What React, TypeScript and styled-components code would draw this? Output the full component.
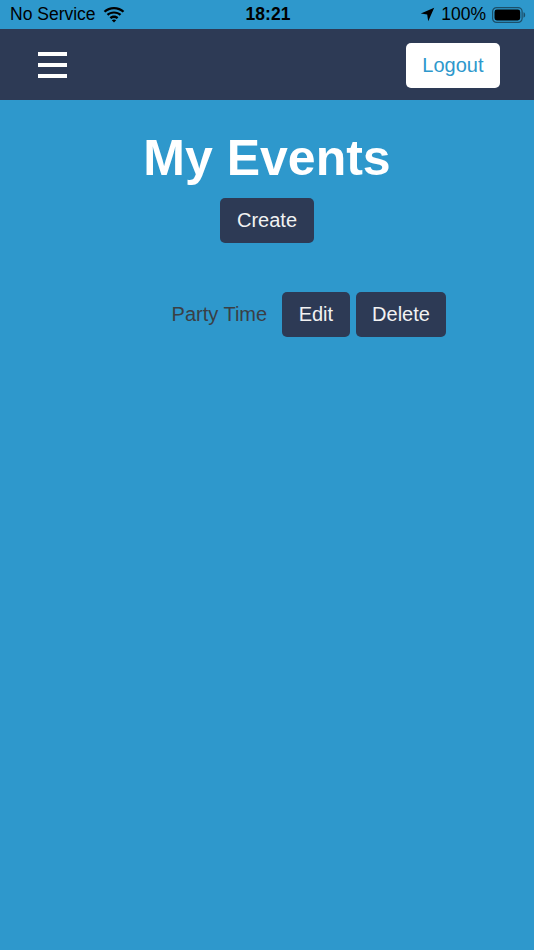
import React from "react";
import styled, { createGlobalStyle } from "styled-components";

const colors = {
    blue: "#2e98cc",
    navy: "#2d3a55",
    white: "#ffffff",
    muted: "#3a3f45",
};

const GlobalStyle = createGlobalStyle`
    html, body {
        margin: 0;
        padding: 0;
        background: ${colors.blue};
        font-family: "Liberation Sans", Arial, sans-serif;
    }
`;

const Page = styled.div`
    width: 534px;
    min-height: 950px;
    background: ${colors.blue};
    display: flex;
    flex-direction: column;
`;

const StatusBar = styled.div`
    height: 29px;
    display: grid;
    grid-template-columns: 1fr auto 1fr;
    align-items: center;
    padding: 0 8px 0 10px;
    font-size: 17.5px;
    color: #000;
`;

const StatusLeft = styled.div`
    display: flex;
    align-items: center;
    gap: 7px;
`;

const StatusTime = styled.div`
    font-weight: 700;
`;

const StatusRight = styled.div`
    display: flex;
    align-items: center;
    justify-content: flex-end;
    gap: 6px;
`;

const NavBar = styled.nav`
    height: 71px;
    box-sizing: border-box;
    background: ${colors.navy};
    display: flex;
    align-items: center;
    justify-content: space-between;
    padding: 2px 34px 0 38px;
`;

const MenuButton = styled.div`
    width: 29px;
    display: flex;
    flex-direction: column;
    gap: 7.5px;
    margin-top: -1px;
`;

const MenuBar = styled.span`
    display: block;
    height: 3.5px;
    background: ${colors.white};
`;

const LogoutButton = styled.button`
    height: 45px;
    padding: 0 16.5px;
    border: none;
    border-radius: 5px;
    background: ${colors.white};
    color: ${colors.blue};
    font-family: inherit;
    font-size: 20px;
`;

const Main = styled.main`
    display: flex;
    flex-direction: column;
    align-items: center;
`;

const Title = styled.h1`
    margin: 29px 0 0;
    font-size: 50px;
    line-height: 58px;
    font-weight: 700;
    color: ${colors.white};
`;

const DarkButton = styled.button`
    height: 45px;
    padding: 0 16.5px;
    border: none;
    border-radius: 5px;
    background: ${colors.navy};
    color: #f2f2f2;
    font-family: inherit;
    font-size: 20px;
`;

const CreateButton = styled(DarkButton)`
    margin-top: 11px;
`;

const EventList = styled.ul`
    list-style: none;
    margin: 49px 0 0;
    padding: 0 0 0 84px;
    align-self: stretch;
    display: flex;
    flex-direction: column;
    align-items: center;
`;

const EventRow = styled.li`
    display: flex;
    align-items: center;
    gap: 6px;
`;

const EventName = styled.span`
    font-size: 20px;
    color: ${colors.muted};
    margin-right: 9px;
`;

const WifiIcon = () => (
    <svg width="22" height="16" viewBox="0 0 22 16">
        <path d="M11 2.2c3.4 0 6.4 1.3 8.7 3.4l1.6-1.7C18.6 1.4 15 0 11 0S3.4 1.4.7 3.9l1.6 1.7C4.6 3.5 7.6 2.2 11 2.2z" fill="#000" />
        <path d="M11 6.6c2.2 0 4.2.8 5.7 2.2l1.6-1.7C16.4 5.4 13.8 4.4 11 4.4S5.6 5.4 3.7 7.1l1.6 1.7C6.8 7.4 8.8 6.6 11 6.6z" fill="#000" />
        <path d="M11 10.9c1.1 0 2 .4 2.8 1l1.6-1.7C14.2 9.2 12.7 8.6 11 8.6S7.8 9.2 6.6 10.2l1.6 1.7c.8-.6 1.7-1 2.8-1z" fill="#000" />
        <path d="M11 15.6l2.2-2.3c-.6-.5-1.4-.8-2.2-.8s-1.6.3-2.2.8z" fill="#000" />
    </svg>
);

const LocationIcon = () => (
    <svg width="15" height="15" viewBox="0 0 15 15">
        <path d="M14.2.8L.8 6.6l6.4.9 1 6.7z" fill="#000" />
    </svg>
);

const BatteryIcon = () => (
    <svg width="34" height="16" viewBox="0 0 34 16">
        <rect x="0.6" y="0.6" width="29.5" height="14.8" rx="4" fill="none" stroke="#1c4f69" strokeWidth="1.2" />
        <rect x="2.5" y="2.5" width="25.7" height="11" rx="2.4" fill="#000" />
        <path d="M31.5 5.3c1.1.3 1.7 1.4 1.7 2.7s-.6 2.4-1.7 2.7z" fill="#1c4f69" />
    </svg>
);

export default function App() {
    return (
        <Page>
            <GlobalStyle />
            <StatusBar>
                <StatusLeft>
                    <span>No Service</span>
                    <WifiIcon />
                </StatusLeft>
                <StatusTime>18:21</StatusTime>
                <StatusRight>
                    <LocationIcon />
                    <span>100%</span>
                    <BatteryIcon />
                </StatusRight>
            </StatusBar>
            <NavBar>
                <MenuButton>
                    <MenuBar />
                    <MenuBar />
                    <MenuBar />
                </MenuButton>
                <LogoutButton>Logout</LogoutButton>
            </NavBar>
            <Main>
                <Title>My Events</Title>
                <CreateButton>Create</CreateButton>
                <EventList>
                    <EventRow>
                        <EventName>Party Time</EventName>
                        <DarkButton>Edit</DarkButton>
                        <DarkButton>Delete</DarkButton>
                    </EventRow>
                </EventList>
            </Main>
        </Page>
    );
}
